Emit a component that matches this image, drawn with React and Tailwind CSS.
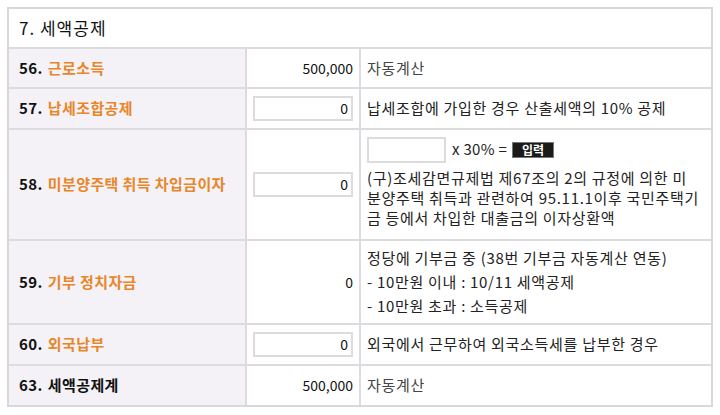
import React from "react";

const font = { fontFamily: '"Noto Sans CJK KR", "Noto Sans", sans-serif' };

function Label({ num, text, orange = true }) {
  return (
    <div className="bg-[#f4f2f6] flex items-center pl-[10px] text-[15px] font-bold tracking-[0.4px]">
      <span className="text-[#111]">{num}</span>
      <span className={orange ? "ml-[5px] text-[#e8862a]" : "ml-[5px] text-[#111]"}>{text}</span>
    </div>
  );
}

function InputBox({ w = "w-[100px]" }) {
  return (
    <div className={`${w} h-[25px] border-2 border-[#dcdcdc] bg-white flex items-center justify-end pr-[3px] text-[14px] text-[#111]`}>
      0
    </div>
  );
}

function Row({ h, label, value, desc, last }) {
  return (
    <div className={`grid grid-cols-[236px_2px_112px_2px_1fr] ${h} ${last ? "" : "border-b-2 border-[#dddbe0]"}`}>
      {label}
      <div className="bg-[#dddbe0]" />
      <div className="flex items-center justify-end pr-[6px] text-[14px] text-[#111]">{value}</div>
      <div className="bg-[#dddbe0]" />
      <div className="flex items-center pl-[6px] text-[15px] tracking-[0.7px] text-[#222]">{desc}</div>
    </div>
  );
}

export default function App() {
  return (
    <div className="w-[720px] h-[415px] bg-white pt-[7px] pl-[7px]" style={font}>
      <div className="w-[706px] border-2 border-[#d9d7db]">
        <div className="h-[40px] border-b-2 border-[#dddbe0] flex items-center pl-[10px] text-[17px] tracking-[1px] text-[#111]">
          7. 세액공제
        </div>
        <Row h="h-[40px]" label={<Label num="56." text="근로소득" />} value="500,000" desc={<span className="text-[#444]">자동계산</span>} />
        <Row h="h-[41px]" label={<Label num="57." text="납세조합공제" />} value={<InputBox />} desc="납세조합에 가입한 경우 산출세액의 10% 공제" />
        <Row
          h="h-[111px]"
          label={<Label num="58." text="미분양주택 취득 차입금이자" />}
          value={<InputBox />}
          desc={
            <div className="flex flex-col pb-[5px]">
              <div className="flex items-center h-[26px] mb-[5px]">
                <div className="w-[79px] h-[26px] border-2 border-[#dcdcdc] bg-white" />
                <span className="ml-[6px] tracking-[0.3px]">x 30% =</span>
                <span className="ml-[5px] h-[16px] w-[42px] bg-[#1a1a1a] border border-[#777] text-white text-[12px] font-bold leading-[14px] tracking-[0px] flex items-center justify-center">입력</span>
              </div>
              <div className="h-[20px] leading-[20px]">(구)조세감면규제법 제67조의 2의 규정에 의한 미</div>
              <div className="h-[20px] leading-[20px]">분양주택 취득과 관련하여 95.11.1이후 국민주택기</div>
              <div className="h-[20px] leading-[20px]">금 등에서 차입한 대출금의 이자상환액</div>
            </div>
          }
        />
        <Row
          h="h-[84px]"
          label={<Label num="59." text="기부 정치자금" />}
          value="0"
          desc={
            <div className="flex flex-col">
              <div className="h-[24px] leading-[24px]">정당에 기부금 중 (38번 기부금 자동계산 연동)</div>
              <div className="h-[24px] leading-[24px]">- 10만원 이내 : 10/11 세액공제</div>
              <div className="h-[24px] leading-[24px]">- 10만원 초과 : 소득공제</div>
            </div>
          }
        />
        <Row h="h-[41px]" label={<Label num="60." text="외국납부" />} value={<InputBox />} desc="외국에서 근무하여 외국소득세를 납부한 경우" />
        <Row h="h-[39px]" last label={<Label num="63." text="세액공제계" orange={false} />} value="500,000" desc={<span className="text-[#444]">자동계산</span>} />
      </div>
    </div>
  );
}
